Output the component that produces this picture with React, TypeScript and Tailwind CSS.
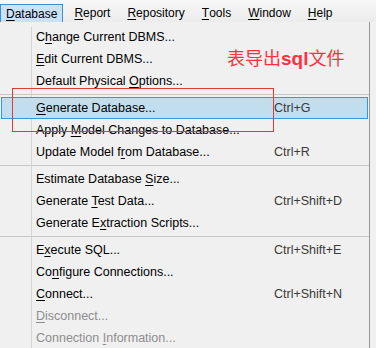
import React from 'react';

type Item = {
  pre: string;
  key: string;
  post: string;
  shortcut?: string;
  disabled?: boolean;
  active?: boolean;
};

const groups: Item[][] = [
  [
    { pre: 'C', key: 'h', post: 'ange Current DBMS...' },
    { pre: '', key: 'E', post: 'dit Current DBMS...' },
    { pre: 'Default Physical ', key: 'O', post: 'ptions...' },
  ],
  [
    { pre: '', key: 'G', post: 'enerate Database...', shortcut: 'Ctrl+G', active: true },
    { pre: 'Apply ', key: 'M', post: 'odel Changes to Database...' },
    { pre: 'Update Model f', key: 'r', post: 'om Database...', shortcut: 'Ctrl+R' },
  ],
  [
    { pre: 'Estimate Database ', key: 'S', post: 'ize...' },
    { pre: 'Generate ', key: 'T', post: 'est Data...', shortcut: 'Ctrl+Shift+D' },
    { pre: 'Generate E', key: 'x', post: 'traction Scripts...' },
  ],
  [
    { pre: 'E', key: 'x', post: 'ecute SQL...', shortcut: 'Ctrl+Shift+E' },
    { pre: 'Co', key: 'n', post: 'figure Connections...' },
    { pre: '', key: 'C', post: 'onnect...', shortcut: 'Ctrl+Shift+N' },
    { pre: '', key: 'D', post: 'isconnect...', disabled: true },
    { pre: 'Connection ', key: 'I', post: 'nformation...', disabled: true },
  ],
];

const menus = [
  { key: 'D', rest: 'atabase' },
  { key: 'R', rest: 'eport' },
  { key: 'R', rest: 'epository' },
  { key: 'T', rest: 'ools' },
  { key: 'W', rest: 'indow' },
  { key: 'H', rest: 'elp' },
];

const MenuRow = ({ item }: { item: Item }) => (
  <div
    className={`relative flex h-[22px] items-center ${
      item.active ? 'mx-px border border-[#3399dd] bg-[#c2deee]' : 'mx-px border border-transparent'
    }`}
  >
    <span className={`pl-[34px] w-[272px] ${item.disabled ? 'text-[#8d8d8d]' : 'text-black'}`}>
      {item.pre}
      <span className="underline underline-offset-2">{item.key}</span>
      {item.post}
    </span>
    {item.shortcut && <span className="text-[#3a3a3a]">{item.shortcut}</span>}
  </div>
);

export default function App() {
  return (
    <div className="relative h-[348px] w-[376px] overflow-hidden bg-[#f0f0f0] font-['Liberation_Sans','Noto_Sans_CJK_SC',sans-serif] text-[12.5px]">
      <div className="flex h-[22px] items-end bg-gradient-to-b from-[#f7f7f7] to-[#ececec] text-[12px]">
        {menus.map((m, i) => (
          <div
            key={i}
            className={`flex h-[18px] items-center px-[5px] mr-[5px] ${
              i === 0 ? 'border border-b-0 border-[#3b8fd6] bg-[#cbe2f6]' : 'border border-transparent'
            }`}
          >
            <span className="underline underline-offset-2">{m.key}</span>
            {m.rest}
          </div>
        ))}
      </div>

      <div className="relative w-[370px] border-r border-[#979797] bg-[#f0f0f0] pt-[4px]">
        <div className="absolute left-[31px] top-[5px] bottom-0 w-px bg-[#d4d4d4]" />
        {groups.map((g, gi) => (
          <div key={gi}>
            {gi > 0 && (
              <div className="relative flex h-[5px] items-center">
                <div className="h-px w-full bg-[#c9c9c9]" />
              </div>
            )}
            {g.map((item, ii) => (
              <MenuRow key={ii} item={item} />
            ))}
          </div>
        ))}
      </div>

      <div className="absolute left-[227px] top-[44px] text-[18px] leading-[26px] text-[#ff3040] font-['Noto_Sans_CJK_SC',sans-serif]">
        表导出<span className="font-bold font-['Liberation_Sans',sans-serif] text-[19px]">sql</span>文件
      </div>
      <div className="absolute left-[12px] top-[88px] h-[44px] w-[262px] border border-[#e53935]" />
    </div>
  );
}
